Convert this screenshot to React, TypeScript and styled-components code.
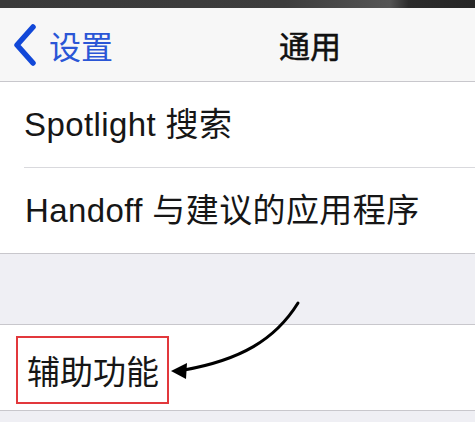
import styled, { createGlobalStyle } from "styled-components";

const GlobalStyle = createGlobalStyle`
  html, body {
    margin: 0;
    padding: 0;
    background: #efeff4;
  }
  body {
    font-family: "Liberation Sans", "Noto Sans CJK SC", sans-serif;
  }
`;

const Page = styled.div`
  position: relative;
  width: 475px;
  height: 422px;
  overflow: hidden;
  background: #efeff4;
`;

const StatusStrip = styled.div`
  height: 8px;
  background: linear-gradient(
    90deg,
    #3a3a3a 0%,
    #3d3d3d 60%,
    #555 82%,
    #2c2c2c 86%,
    #262626 100%
  );
`;

const NavBar = styled.div`
  display: flex;
  align-items: center;
  height: 73px;
  padding-left: 12px;
  background: #f7f7f7;
  border-bottom: 1px solid #c8c7cc;
`;

const BackButton = styled.button`
  display: flex;
  align-items: center;
  gap: 12px;
  padding: 0;
  background: none;
  border: none;
  color: #2a56d6;
  font-family: "Noto Sans CJK SC", sans-serif;
  font-size: 32px;
  line-height: 1;
  cursor: pointer;
`;

const Title = styled.div`
  margin-left: 166px;
  font-family: "Noto Sans CJK SC", sans-serif;
  font-size: 31px;
  font-weight: 400;
  -webkit-text-stroke: 0.5px #111;
  color: #111;
  line-height: 1;
`;

const Group = styled.div`
  background: #fff;
  border-bottom: 1px solid #c8c7cc;
  border-top: ${(p) => (p.$top ? "1px solid #c8c7cc" : "none")};
`;

const Row = styled.div`
  padding-left: ${(p) => (p.$pad ?? 25)}px;
`;

const RowInner = styled.div`
  display: flex;
  align-items: center;
  height: 85px;
  border-bottom: ${(p) => (p.$last ? "none" : "1px solid #d9d9dd")};
  margin-left: ${(p) => (p.$last ? 0 : -1)}px;
  font-size: 33px;
  letter-spacing: 0.4px;
  line-height: 36px;
  color: #161616;
`;

const Gap = styled.div`
  height: 70px;
`;

const Highlight = styled.span`
  display: inline-flex;
  align-items: center;
  height: 64px;
  margin-top: 5px;
  padding: 0 8px 0 9px;
  border: 2px solid #e2383c;
  font-family: "Noto Sans CJK SC", sans-serif;
  letter-spacing: 0;
`;

const ArrowLayer = styled.svg`
  position: absolute;
  left: 0;
  top: 0;
  pointer-events: none;
`;

function Chevron() {
  return (
    <svg width="25" height="42" viewBox="0 0 25 42">
      <path
        d="M21 3 L5 21 L21 39"
        fill="none"
        stroke="#1248d8"
        strokeWidth="5.5"
        strokeLinecap="round"
        strokeLinejoin="round"
      />
    </svg>
  );
}

export default function App() {
  return (
    <Page>
      <GlobalStyle />
      <StatusStrip />
      <NavBar>
        <BackButton>
          <Chevron />
          设置
        </BackButton>
        <Title>通用</Title>
      </NavBar>

      <Group>
        <Row>
          <RowInner>Spotlight 搜索</RowInner>
        </Row>
        <Row>
          <RowInner $last>Handoff 与建议的应用程序</RowInner>
        </Row>
      </Group>

      <Gap />

      <Group $top>
        <Row $pad={16}>
          <RowInner $last>
            <Highlight>辅助功能</Highlight>
          </RowInner>
        </Row>
      </Group>

      <ArrowLayer width="475" height="422" viewBox="0 0 475 422">
        <path
          d="M298 303 C275 340 240 360 184 370"
          fill="none"
          stroke="#000"
          strokeWidth="3"
          strokeLinecap="round"
        />
        <polygon points="171,371 187,363 186,379" fill="#000" />
      </ArrowLayer>
    </Page>
  );
}
